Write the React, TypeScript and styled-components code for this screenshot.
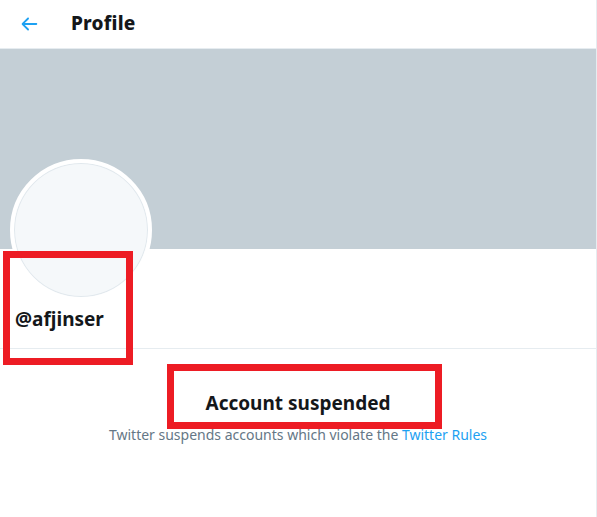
import styled, { createGlobalStyle } from 'styled-components';

let Global = createGlobalStyle`
  html, body {
    margin: 0;
    padding: 0;
    background: #fff;
  }
  body {
    font-family: "Segoe UI", "Noto Sans", "Open Sans", sans-serif;
    color: #14171a;
  }
`;

let Column = styled.div`
  position: relative;
  width: 596px;
  min-height: 517px;
  border-right: 1px solid #e6ecf0;
`;

let Header = styled.div`
  display: flex;
  align-items: center;
  height: 49px;
  padding: 0 14px 0 18px;
  box-sizing: border-box;
  border-bottom: 1px solid #e6ecf0;
`;

let Back = styled.div`
  display: flex;
  align-items: center;
  width: 53px;
  color: #1da1f2;
  margin-top: -1px;
`;

let Title = styled.div`
  font-size: 19px;
  font-weight: 800;
  line-height: 24px;
  letter-spacing: 0.2px;
  margin-top: -2px;
`;

let Banner = styled.div`
  height: 200px;
  background: #c4cfd6;
`;

let ProfileInfo = styled.div`
  display: flow-root;
  padding: 0 15px 0 10px;
  border-bottom: 1px solid #e6ecf0;
  height: 100px;
  box-sizing: border-box;
`;

let Avatar = styled.div`
  width: 134px;
  height: 134px;
  margin-top: -90px;
  border-radius: 50%;
  border: 4px solid #fff;
  background: #f5f8fa;
  box-shadow: inset 0 0 0 1px #e1e8ed;
`;

let Handle = styled.div`
  margin: 6px 0 0 5px;
  font-size: 19px;
  font-weight: 700;
  line-height: 24px;
`;

let Notice = styled.div`
  display: flex;
  flex-direction: column;
  align-items: center;
  padding-top: 42px;
`;

let NoticeTitle = styled.div`
  font-size: 19px;
  font-weight: 700;
  line-height: 24px;
`;

let NoticeText = styled.div`
  font-size: 14px;
  line-height: 20px;
  color: #657786;
  margin-top: 10px;
`;

let RulesLink = styled.a`
  color: #1da1f2;
  text-decoration: none;
`;

let Marker = styled.div<{ left: number; top: number; w: number; h: number }>`
  position: absolute;
  left: ${p => p.left}px;
  top: ${p => p.top}px;
  width: ${p => p.w}px;
  height: ${p => p.h}px;
  border: 7px solid #ed1c24;
  box-sizing: border-box;
  pointer-events: none;
`;

export default function App() {
  return (
    <>
      <Global />
      <Column>
        <Header>
          <Back>
            <svg width="22" height="22" viewBox="0 0 24 24" fill="currentColor">
              <path d="M20 11H7.414l4.293-4.293c.39-.39.39-1.023 0-1.414s-1.023-.39-1.414 0l-6 6c-.39.39-.39 1.023 0 1.414l6 6c.195.195.45.293.707.293s.512-.098.707-.293c.39-.39.39-1.023 0-1.414L7.414 13H20c.553 0 1-.447 1-1s-.447-1-1-1z" />
            </svg>
          </Back>
          <Title>Profile</Title>
        </Header>
        <Banner />
        <ProfileInfo>
          <Avatar />
          <Handle>@afjinser</Handle>
        </ProfileInfo>
        <Notice>
          <NoticeTitle>Account suspended</NoticeTitle>
          <NoticeText>
            Twitter suspends accounts which violate the <RulesLink href="#">Twitter Rules</RulesLink>
          </NoticeText>
        </Notice>
        <Marker left={3} top={251} w={130} h={114} />
        <Marker left={167} top={364} w={275} h={65} />
      </Column>
    </>
  );
}
